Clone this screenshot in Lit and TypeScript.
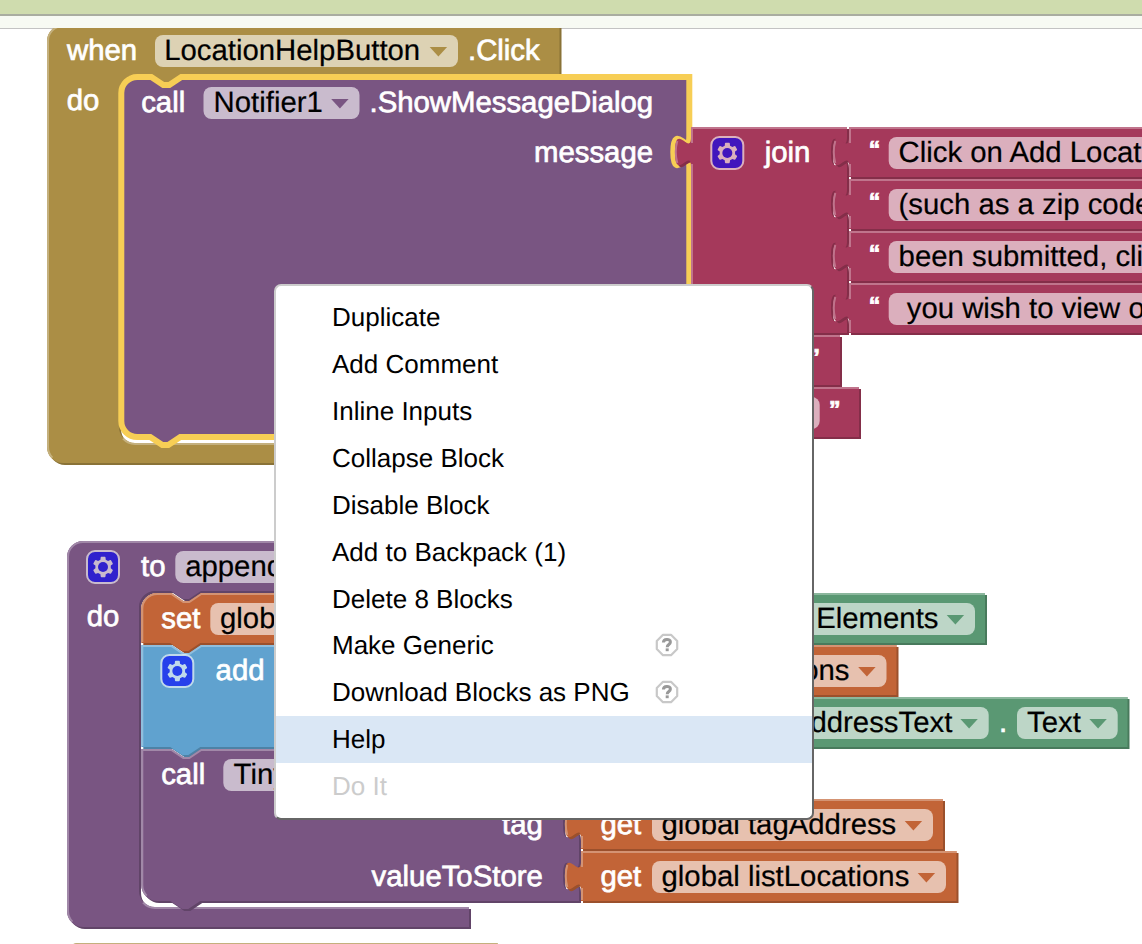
import { LitElement, html, css, svg } from "lit";
import { customElement, property } from "lit/decorators.js";

const GOLD = "#ab8e45";
const PURPLE = "#795582";
const CRIMSON = "#a5395b";
const GREEN = "#5a9873";
const ORANGE = "#c26437";
const BLUE = "#60a2cf";

const blend = (hex: string, target: number, amount: number) =>
  "#" + [1, 3, 5].map((i) => Math.round(parseInt(hex.slice(i, i + 2), 16) * (1 - amount) + target * amount).toString(16).padStart(2, "0")).join("");

// Shape fragments, in workspace units (one unit is two screen pixels).
const NOTCH = "l 6,4 3,0 6,-4";
const NOTCH_BACK = "l -6,4 -3,0 -6,-4";
const TAB_DOWN = "v 5 c 0,10 -8,-8 -8,7.5 s 8,-2.5 8,7.5";
const TAB_UP = "V 20 c 0,-10 -8,8 -8,-7.5 s 8,2.5 8,-7.5";
const GEAR = "m4.203,7.296 0,1.368 -0.92,0.677 -0.11,0.41 0.9,1.559 0.41,0.11 1.043,-0.457 1.187,0.683 0.127,1.134 0.3,0.3 1.8,0 0.3,-0.299 0.127,-1.138 1.185,-0.682 1.046,0.458 0.409,-0.11 0.9,-1.559 -0.11,-0.41 -0.92,-0.677 0,-1.366 0.92,-0.677 0.11,-0.41 -0.9,-1.559 -0.409,-0.109 -1.046,0.458 -1.185,-0.682 -0.127,-1.138 -0.3,-0.299 -1.8,0 -0.3,0.3 -0.126,1.135 -1.187,0.682 -1.043,-0.457 -0.41,0.11 -0.899,1.559 0.108,0.409z";

const block = (x: number, y: number, color: string, path: string, light: string) => svg`
  <g transform="translate(${x},${y}) scale(2)">
    <path d=${path} fill=${blend(color, 0, 0.2)} transform="translate(1,1)"></path>
    <path d=${path} fill=${color}></path>
    <path d=${light} fill="none" stroke=${blend(color, 255, 0.3)} stroke-width="1"></path>
  </g>`;

const inputs = (w: number, rows: number[]) => rows.map((r) => `V ${r} ${TAB_DOWN}`).join(" ") + ` H ${w}`;

const valueBlock = (x: number, y: number, right: number, color: string, h = 25, rows: number[] = []) => {
  const w = (right - x) / 2;
  const glints = rows.map((r) => ` M ${w - 5},${r + 19.3} l 3.7,-2.1`).join("");
  return block(x, y, color,
    `M 0,0 H ${w} ${inputs(w, rows)} V ${h} H 0 ${TAB_UP} z`,
    `M 0.5,${h - 0.5} V 18.5 m -7.36,-0.5 q -1.52,-5.5 0,-11 m 7.36,1 V 0.5 H ${w}${glints}`);
};

const statement = (w: number, h: number, rows: number[], round: boolean, roundEnd: boolean) => {
  const start = round ? "M 0,8 A 8,8 0 0,1 8,0" : "M 0,0";
  const end = roundEnd ? `H 8 a 8,8 0 0,1 -8,-8` : `H 0`;
  return `${start} H 15 ${NOTCH} H ${w} ${inputs(w, rows)} V ${h} H 29.5 ${NOTCH_BACK} ${end} z`;
};

const statementBlock = (x: number, y: number, right: number, color: string, h: number, round = false, roundEnd = false, rows: number[] = []) => {
  const w = (right - x) / 2;
  const tail = roundEnd ? `M 2.7,${h - 2.7} A 7.5,7.5 0 0,1 0.5,${h - 8}` : `M 0.5,${h - 0.5}`;
  const head = round ? "V 8 A 7.5,7.5 0 0,1 8,0.5" : "V 0.5";
  return block(x, y, color, statement(w, h, rows, round, roundEnd), `${tail} ${head} H 15 ${NOTCH} H ${w}`);
};

// A C-shaped block that wraps a stack of statements.
const wrapBlock = (x: number, y: number, right: number, armRight: number, color: string, inner: number, top: number, bottom: number, h: number) => {
  const w = (right - x) / 2;
  const aw = (armRight - x) / 2;
  return block(x, y, color,
    `M 0,8 A 8,8 0 0,1 8,0 H ${w} V ${top} H ${inner + 31} ${NOTCH_BACK} H ${inner + 8} a 8,8 0 0,0 -8,8 V ${bottom - 8} a 8,8 0 0,0 8,8 H ${aw} V ${h} H 8 a 8,8 0 0,1 -8,-8 z`,
    `M 2.7,${h - 2.7} A 7.5,7.5 0 0,1 0.5,${h - 8} V 8 A 7.5,7.5 0 0,1 8,0.5 H ${w} M ${inner + 2},${bottom - 2.2} A 8.5,8.5 0 0,0 ${inner + 8},${bottom + 0.5} H ${aw}`);
};

const label = (x: number, y: number, text: string) => svg`<text class="label" x=${x} y=${y}>${text}</text>`;
const value = (x: number, y: number, text: string, anchor = "start") => svg`<text class="value" x=${x} y=${y} text-anchor=${anchor}>${text}</text>`;
const quote = (x: number, y: number, text: string) => svg`<text class="quote" x=${x} y=${y}>${text}</text>`;
const pill = (x: number, y: number, right: number, arrow = "") => svg`
  <rect x=${x} y=${y} width=${right - x} height="32" rx="8" fill="#fff" fill-opacity="0.6"></rect>
  ${arrow ? svg`<path d="M ${right - 28.3},${y + 12} h 17.4 l -8.7,9.6 z" fill=${arrow}></path>` : ""}`;
const gear = (x: number, y: number) => svg`
  <g transform="translate(${x},${y}) scale(2)" opacity="0.6">
    <rect width="16" height="16" rx="4" fill="#00f" stroke="#fff"></rect>
    <path d=${GEAR} fill="#fff"></path>
    <circle cx="8" cy="8" r="2.5" fill="#00f"></circle>
  </g>`;

@customElement("block-canvas")
class BlockCanvas extends LitElement {
  static styles = css`
    :host { display: block; }
    svg { display: block; }
    text { font-family: "Liberation Sans", Arial, sans-serif; font-size: 29.33px; white-space: pre; text-rendering: geometricPrecision; }
    .label { fill: #fff; stroke: #fff; stroke-width: 0.7px; }
    .value { fill: #000; stroke: #000; stroke-width: 0.2px; }
    .quote { fill: #fff; stroke: #fff; stroke-width: 0.8px; font-weight: 700; font-size: 23px; }
  `;

  render() {
    const strings = ["Click on Add Locat", "(such as a zip code", "been submitted, cli", " you wish to view o"];
    return html`<svg width="1142" height="916" viewBox="0 28 1142 916">
      ${wrapBlock(47, 25, 559.5, 559.5, GOLD, 36, 25, 209, 219)}
      ${label(67, 60, "when")}${pill(155, 35, 458, GOLD)}${value(164.2, 60, "LocationHelpButton")}${label(468, 60, ".Click")}
      ${label(66.8, 110, "do")}

      <g transform="translate(121.3,77) scale(2)">
        <path d=${statement(284, 180, [25], true, true)} fill=${PURPLE} stroke="#f7ce55" stroke-width="3"></path>
      </g>
      ${label(141.2, 112, "call")}${pill(203.5, 87, 359.5, PURPLE)}${value(213.6, 112, "Notifier1")}${label(369.5, 112, ".ShowMessageDialog")}
      ${label(534, 162, "message")}

      ${valueBlock(691, 127, 847, CRIMSON, 103, [0, 26, 52, 78])}
      ${gear(711.3, 137)}${label(764.7, 162, "join")}
      ${strings.map((s, i) => {
        const y = 127 + 52 * i;
        return svg`${valueBlock(849, y, 1200, CRIMSON)}${quote(868.8, y + 30, "“")}${pill(888.7, y + 10, 1180)}${value(898.6, y + 35, s)}`;
      })}
      ${valueBlock(691, 335, 840, CRIMSON)}${quote(808.5, 365, "”")}
      ${valueBlock(691, 387, 859, CRIMSON)}${pill(720, 397, 819.7)}${quote(829, 417, "”")}

      ${wrapBlock(67, 541, 560, 469, PURPLE, 36, 25, 183, 193)}
      ${gear(87, 551)}${label(141, 576, "to")}${pill(175.3, 551, 400)}${value(185.2, 576, "append")}
      ${label(86.8, 626, "do")}

      ${statementBlock(141.3, 593, 579, ORANGE, 25, true)}
      ${statementBlock(141.3, 645, 579, BLUE, 51)}
      ${statementBlock(141.3, 749, 579, PURPLE, 76, false, true, [25, 51])}
      ${label(161.3, 628, "set")}${pill(210.3, 603, 500)}${value(220, 628, "global")}
      ${gear(161.3, 655)}${label(215.6, 680, "add")}
      ${label(161.2, 784, "call")}${pill(223.3, 759, 420)}${value(233.6, 784, "Tiny")}
      ${label(502, 834, "tag")}${label(371.6, 886, "valueToStore")}

      ${valueBlock(581, 799, 943, ORANGE)}${label(600.5, 834, "get")}${pill(652, 809, 933, ORANGE)}${value(661.5, 834, "global tagAddress")}
      ${valueBlock(581, 851, 956.5, ORANGE)}${label(600.5, 886, "get")}${pill(652, 861, 946, ORANGE)}${value(661.5, 886, "global listLocations")}

      ${valueBlock(581, 593, 985, GREEN)}${pill(640, 603, 975, GREEN)}${value(816.2, 628, "Elements")}
      ${valueBlock(581, 645, 896.5, ORANGE)}${pill(640, 655, 886.5, ORANGE)}${value(849.5, 680, "Locations", "end")}
      ${valueBlock(581, 697, 1127.5, GREEN)}${pill(640, 707, 988.7, GREEN)}${value(952.3, 732, "AddressText", "end")}
      ${label(999, 732, ".")}${pill(1017, 707, 1117.7, GREEN)}${value(1027, 732, "Text")}

      ${wrapBlock(63, 943, 497.5, 497.5, GOLD, 36, 25, 60, 70)}
    </svg>`;
  }
}

interface Item { text: string; help?: boolean; active?: boolean; disabled?: boolean; }

@customElement("context-menu")
class ContextMenu extends LitElement {
  @property({ attribute: false }) items: Item[] = [];

  static styles = css`
    :host {
      display: block; box-sizing: border-box; background: #fff; padding: 8.27px 0 0;
      border: 2px solid; border-color: #ccc #666 #666 #ccc; border-radius: 7px;
      font: 26px "Liberation Sans", Arial, sans-serif; color: #000;
      text-rendering: geometricPrecision;
    }
    .item { display: flex; align-items: center; height: 46.9px; padding-left: 56px; white-space: nowrap; }
    .name { width: 323px; }
    .active { background: #dae7f5; }
    .disabled { color: #ccc; }
    .help { width: 24px; height: 24px; margin-bottom: 2px; }
  `;

  render() {
    return this.items.map((i) => html`
      <div class="item ${i.active ? "active" : ""} ${i.disabled ? "disabled" : ""}">
        <span class="name">${i.text}</span>
        ${i.help ? html`<svg class="help" viewBox="0 0 24 24">
          <path d="M8 1.8 H16 L22.2 8 V16 L16 22.2 H8 L1.8 16 V8 Z" fill="#fff" stroke="#c8c8c8" stroke-width="2.2" stroke-linejoin="round"></path>
          <path d="M8.4 9.6 C8.4 5.6 15.4 5.6 15.4 9 C15.4 11.6 12.2 11.4 12.2 14.2" fill="none" stroke="#999" stroke-width="3"></path>
          <rect x="10.7" y="15.4" width="3" height="2.8" fill="#999"></rect>
        </svg>` : ""}
      </div>`);
  }
}

@customElement("app-root")
class AppRoot extends LitElement {
  static styles = css`
    :host { display: flex; flex-direction: column; position: relative; width: 1142px; height: 944px; overflow: hidden; background: #fff; }
    .bar { height: 14px; background: #cfdcae; border-bottom: 2px solid #a9ada0; }
    .strip { height: 12px; background: #f7faf3; }
    .workspace { height: 916px; background: linear-gradient(#c3c3c3 1px, #fff 1px); }
    .menu { position: absolute; left: 274px; top: 284px; width: 540px; height: 536px; }
  `;

  private items: Item[] = [
    { text: "Duplicate" },
    { text: "Add Comment" },
    { text: "Inline Inputs" },
    { text: "Collapse Block" },
    { text: "Disable Block" },
    { text: "Add to Backpack (1)" },
    { text: "Delete 8 Blocks" },
    { text: "Make Generic", help: true },
    { text: "Download Blocks as PNG", help: true },
    { text: "Help", active: true },
    { text: "Do It", disabled: true },
  ];

  render() {
    return html`
      <div class="bar"></div>
      <div class="strip"></div>
      <block-canvas class="workspace"></block-canvas>
      <context-menu class="menu" .items=${this.items}></context-menu>`;
  }
}
